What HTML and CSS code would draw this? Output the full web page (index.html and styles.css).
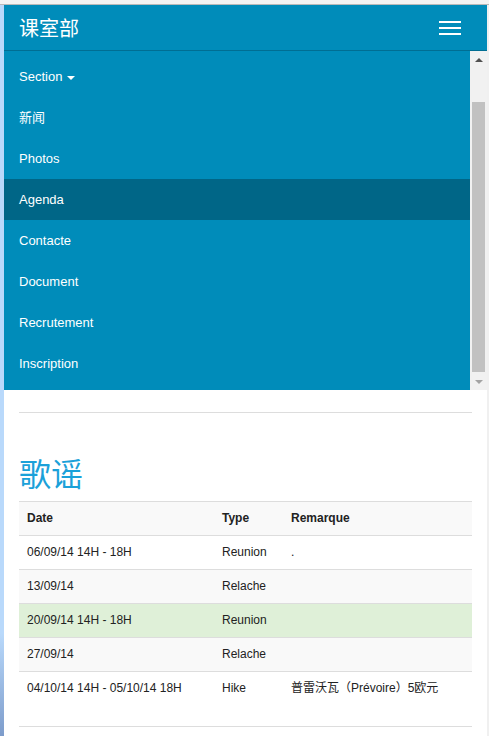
FILE: index.html
```html
<!DOCTYPE html>
<html lang="zh">
<head>
<meta charset="utf-8">
<title>课室部</title>
<link rel="stylesheet" href="styles.css">
</head>
<body>
<div class="top-edge"></div>
<div class="window">
  <div class="left-edge"></div>
  <div class="page">
    <nav class="navbar">
      <div class="navbar-header">
        <span class="brand">课室部</span>
        <span class="toggle"><i></i><i></i><i></i></span>
      </div>
      <div class="collapse">
        <ul class="nav">
          <li><a href="#">Section <span class="caret"></span></a></li>
          <li><a href="#">新闻</a></li>
          <li><a href="#">Photos</a></li>
          <li class="active"><a href="#">Agenda</a></li>
          <li><a href="#">Contacte</a></li>
          <li><a href="#">Document</a></li>
          <li><a href="#">Recrutement</a></li>
          <li><a href="#">Inscription</a></li>
        </ul>
        <div class="scrollbar">
          <div class="sb-btn"><span class="arrow-up"></span></div>
          <div class="sb-track"><div class="sb-thumb"></div></div>
          <div class="sb-btn"><span class="arrow-down"></span></div>
        </div>
      </div>
    </nav>
    <main class="content">
      <hr class="rule">
      <h1 class="title">歌谣</h1>
      <table class="agenda">
        <colgroup><col class="c-date"><col class="c-type"><col></colgroup>
        <tbody>
          <tr><th>Date</th><th>Type</th><th>Remarque</th></tr>
          <tr><td>06/09/14 14H - 18H</td><td>Reunion</td><td>.</td></tr>
          <tr><td>13/09/14</td><td>Relache</td><td></td></tr>
          <tr class="success"><td>20/09/14 14H - 18H</td><td>Reunion</td><td></td></tr>
          <tr><td>27/09/14</td><td>Relache</td><td></td></tr>
          <tr><td>04/10/14 14H - 05/10/14 18H</td><td>Hike</td><td>普雷沃瓦（Prévoire）5欧元</td></tr>
        </tbody>
      </table>
      <hr class="rule rule-bottom">
    </main>
  </div>
  <div class="right-edge"></div>
</div>
</body>
</html>
```
FILE: styles.css
```css
html, body {
  margin: 0;
  padding: 0;
}
body {
  height: 736px;
  overflow: hidden;
  background: #fff;
  color: #222;
  font-family: "Liberation Sans", Arial, "Noto Sans CJK SC", sans-serif;
}
.top-edge {
  height: 4px;
  background: #f3f3f3;
  border-bottom: 1px solid #b9b9b9;
}
.window {
  display: flex;
  height: 731px;
}
.left-edge {
  width: 4px;
  flex: none;
  background: linear-gradient(to bottom, #b9d9fb 0%, #b9d9fb 86%, #7d9ccb 100%);
}
.right-edge {
  width: 2px;
  flex: none;
  background: #f0f0f0;
}
.page {
  flex: 1;
  min-width: 0;
  background: #fff;
}
.navbar {
  background: #008cba;
}
.navbar-header {
  height: 45px;
  display: flex;
  align-items: center;
  justify-content: space-between;
  padding: 0 26px 0 15px;
}
.brand {
  color: #fff;
  font-size: 20px;
  font-family: "Noto Sans CJK SC", sans-serif;
  line-height: 1;
}
.toggle {
  display: flex;
  flex-direction: column;
  gap: 4px;
  margin-top: 1px;
}
.toggle i {
  display: block;
  width: 22px;
  height: 2px;
  background: #fff;
}
.collapse {
  display: flex;
  height: 339px;
  border-top: 1px solid #006e93;
}
.nav {
  flex: 1;
  list-style: none;
  margin: 0;
  padding: 5px 0;
}
.nav a {
  display: block;
  padding: 10px 15px;
  line-height: 21px;
  font-size: 13px;
  color: #fff;
  text-decoration: none;
}
.nav .active a {
  background: #006687;
}
.caret {
  display: inline-block;
  width: 0;
  height: 0;
  margin-left: 1px;
  vertical-align: middle;
  border-top: 4px solid #fff;
  border-left: 4px solid transparent;
  border-right: 4px solid transparent;
}
.scrollbar {
  width: 17px;
  flex: none;
  display: flex;
  flex-direction: column;
  background: #f1f1f1;
}
.sb-btn {
  height: 17px;
  display: flex;
  align-items: center;
  justify-content: center;
}
.arrow-up {
  width: 0;
  height: 0;
  border-bottom: 4px solid #505050;
  border-left: 4px solid transparent;
  border-right: 4px solid transparent;
}
.arrow-down {
  width: 0;
  height: 0;
  border-top: 4px solid #a3a3a3;
  border-left: 4px solid transparent;
  border-right: 4px solid transparent;
}
.sb-track {
  flex: 1;
  display: flex;
  flex-direction: column;
  justify-content: flex-end;
  padding: 0 2px 1px;
}
.sb-thumb {
  height: 270px;
  background: #c1c1c1;
}
.content {
  padding: 0 15px;
}
.rule {
  margin: 22px 0 0;
  border: 0;
  border-top: 1px solid #ddd;
  height: 0;
}
.rule-bottom {
  margin-top: 21px;
}
.title {
  margin: 42px 0 11px;
  font-size: 32px;
  line-height: 35px;
  font-weight: normal;
  color: #1ba1d9;
  font-family: "Noto Sans CJK SC", sans-serif;
}
.agenda {
  width: 100%;
  border-collapse: collapse;
  font-size: 12px;
  line-height: 17px;
}
.c-date { width: 195px; }
.c-type { width: 69px; }
.agenda th,
.agenda td {
  padding: 8px;
  border-top: 1px solid #ddd;
  text-align: left;
  vertical-align: top;
}
.agenda th {
  font-weight: bold;
}
.agenda tr:nth-child(odd) {
  background: #f9f9f9;
}
.agenda tr.success td {
  background: #dff0d8;
}
```
